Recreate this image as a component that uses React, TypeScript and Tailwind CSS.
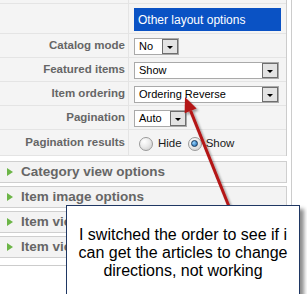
import React from 'react';

function Select({ value, className }: { value: string; className: string }) {
  return (
    <div className={`mt-px flex h-[17px] items-center border border-[#a9a9a9] bg-white ${className}`}>
      <span className="pl-[4px] text-[11px] leading-none text-black">{value}</span>
      <span className="ml-auto flex h-[15px] w-[16px] items-end justify-center border border-[#6e6e6e] bg-[#e3e3e3] pb-[4px]">
        <span className="h-0 w-0 border-x-[3.5px] border-t-[3px] border-x-transparent border-t-black" />
      </span>
    </div>
  );
}

function Row({ label, h, children }: { label?: string; h: string; children?: React.ReactNode }) {
  return (
    <div className={`flex border-b border-[#e4e4e4] ${h}`}>
      <div className="flex w-[129px] shrink-0 items-center justify-end border-r border-[#e4e4e4] pr-[3px] text-[11.5px] font-bold text-[#666666]">
        {label}
      </div>
      <div className="flex flex-1 items-center pl-[5px]">{children}</div>
    </div>
  );
}

function Radio({ checked }: { checked?: boolean }) {
  return (
    <span className="flex h-[14px] w-[14px] shrink-0 items-center justify-center rounded-full border border-[#9a9a9a] bg-[radial-gradient(circle_at_35%_30%,#ffffff_0%,#ebebeb_45%,#c6c6c6_100%)]">
      {checked && (
        <span className="h-[7px] w-[7px] rounded-full border border-[#18385a] bg-[radial-gradient(circle_at_35%_35%,#9ad6ff,#0b5aa6)]" />
      )}
    </span>
  );
}

function Panel({ title }: { title: string }) {
  return (
    <div className="flex h-[22px] items-center overflow-hidden whitespace-nowrap border border-l-0 border-[#cfcfcf] bg-[#f3f3f3]">
      <span className="ml-[7px] h-0 w-0 shrink-0 border-y-[4px] border-l-[6px] border-y-transparent border-l-[#6cb547]" />
      <span className="ml-[8px] text-[13.5px] font-bold text-[#666666]">{title}</span>
    </div>
  );
}

export default function App() {
  return (
    <div className="relative h-[294px] w-[307px] overflow-hidden bg-white font-[Liberation_Sans,Arial,sans-serif]">
      <div className="h-[266px] w-[292px] border-b border-r border-[#cccccc]">
        <div className="w-[287px] border-r border-[#cccccc] bg-[#f4f4f4]">
          <Row h="h-[4px]" />
          <div className="flex h-[30px] border-b border-[#e4e4e4]">
            <div className="w-[129px] shrink-0 border-r border-[#e4e4e4]" />
            <div className="pl-[5px] pt-[4px]">
              <div className="flex h-[23px] w-[147px] items-center bg-[#0a52c4] pl-[4px] text-[12px] text-white">
                Other layout options
              </div>
            </div>
          </div>
          <Row label="Catalog mode" h="h-[24px]">
            <Select value="No" className="w-[45px]" />
          </Row>
          <Row label="Featured items" h="h-[24px]">
            <Select value="Show" className="w-[145px]" />
          </Row>
          <Row label="Item ordering" h="h-[24px]">
            <Select value="Ordering Reverse" className="w-[145px]" />
          </Row>
          <Row label="Pagination" h="h-[24px]">
            <Select value="Auto" className="w-[53px]" />
          </Row>
          <Row label="Pagination results" h="h-[26px]">
            <div className="ml-[5px] mt-[2px] flex items-center text-[11.5px] text-[#1a1a1a]">
              <Radio />
              <span className="ml-[5px]">Hide</span>
              <span className="ml-[6px]">
                <Radio checked />
              </span>
              <span className="ml-[4px]">Show</span>
            </div>
          </Row>
        </div>
        <div className="mt-[5px] flex w-[287px] flex-col gap-[3px]">
          <Panel title="Category view options" />
          <Panel title="Item image options" />
          <Panel title="Item view options" />
          <Panel title="Item view options in category listings" />
        </div>
      </div>

      <svg className="pointer-events-none absolute left-0 top-0" width="307" height="294">
        <defs>
          <filter id="arrowShadow" x="-50%" y="-50%" width="200%" height="200%">
            <feDropShadow dx="2" dy="2" stdDeviation="1.2" floodColor="#000" floodOpacity="0.35" />
          </filter>
        </defs>
        <g filter="url(#arrowShadow)">
          <line x1="190.6" y1="110.9" x2="232" y2="214" stroke="#b41414" strokeWidth="3" />
          <polygon points="185,97 196.6,108.5 184.6,113.3" fill="#b41414" />
        </g>
      </svg>

      <div className="absolute left-[66px] top-[205px] h-[100px] w-[234px] border border-[#1f3763] bg-white pt-[20px] text-center text-[16px] leading-[18px] text-black shadow-[4px_4px_4px_rgba(0,0,0,0.45)]">
        <div className="whitespace-nowrap">I switched the order to see if i</div>
        <div className="whitespace-nowrap">can get the articles to change</div>
        <div className="whitespace-nowrap">directions, not working</div>
      </div>
    </div>
  );
}
